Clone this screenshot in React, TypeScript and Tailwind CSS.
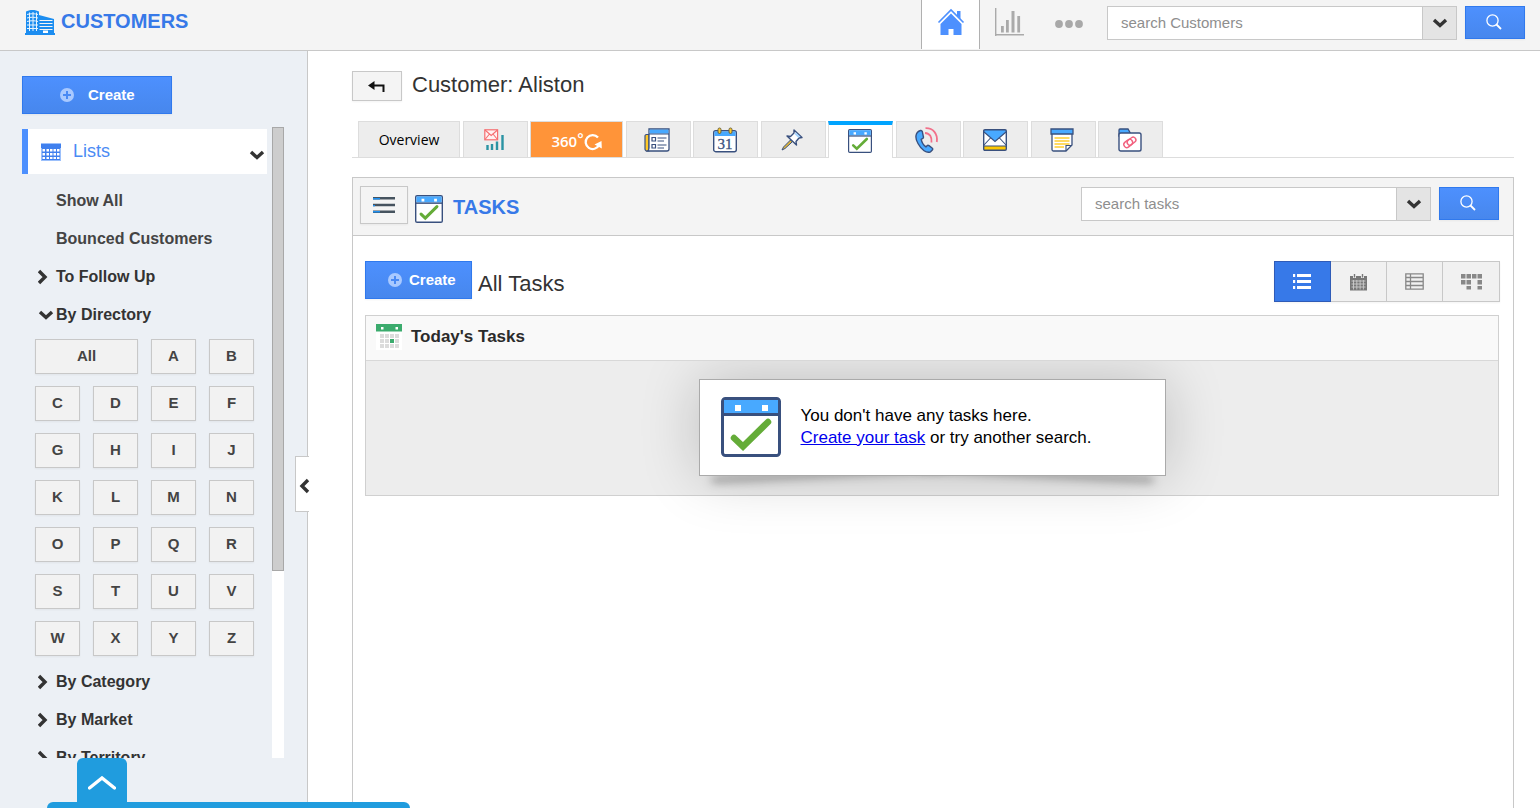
import { ReactNode, useState } from 'react';

const LETTERS = 'ABCDEFGHIJKLMNOPQRSTUVWXYZ'.split('');

function BuildingIcon() {
  return (
    <svg width="30" height="26" viewBox="0 0 30 26" fill="none" aria-hidden="true">
      <path d="M1 2.5C4 .4 11 .4 14 2.5V25H1z" fill="#1c8df0" />
      <path d="M2 5.5c3-1 8-1 11 0M2 9c3-1 8-1 11 0M2 12.5c3-1 8-1 11 0M2 16h11M2 19.5h11M4.5 3.5V22M8 3v19M11.5 3.5V22" stroke="#e9f4fe" strokeWidth="1" />
      <path d="M14 6l15 4v15H14z" fill="#1c8df0" />
      <path d="M14.5 11.5h13M14.5 14.5h13M14.5 17.5h13M14.5 20.5h13" stroke="#f4f4f4" strokeWidth="1.2" />
      <path d="M18 21.500h5V24h-5z" fill="#fff" />
      <path d="M0 24h30v2H0z" fill="#1c8df0" />
    </svg>
  );
}

function HomeIcon() {
  return (
    <svg width="28" height="28" viewBox="0 0 28 28" aria-hidden="true">
      <path d="M20 3h3.500v8L20 7.500z" fill="#4d90fe" />
      <path d="M1.500 14.500L14 2l12.500 12.500" fill="none" stroke="#4d90fe" strokeWidth="1.600" />
      <path d="M14 5.500L24.500 16v11h-8v-6h-5v6h-8V16z" fill="#4d90fe" />
    </svg>
  );
}

function StatsIcon() {
  return (
    <svg width="29" height="28" viewBox="0 0 29 28" fill="#aaa" aria-hidden="true">
      <path d="M0 0h1.400v28H0zM0 26h29v1.500H0zM6 18h2.800v6.500H6zM11 12h2.800v12.500H11zM16.500 3h3v21.500h-3zM22.300 8h2.800v16.500h-2.800z" />
    </svg>
  );
}

function DotsIcon() {
  return (
    <svg width="28" height="8" viewBox="0 0 28 8" fill="#a8a8a8" aria-hidden="true">
      <circle cx="4" cy="4" r="3.900" />
      <circle cx="14" cy="4" r="3.900" />
      <circle cx="24" cy="4" r="3.900" />
    </svg>
  );
}

function Chevron({ dir = 'down' }: { dir?: 'down' | 'right' | 'left' }) {
  const points = {
    down: '2,5 8,10.500 14,5',
    right: '1,2 7,8 1,14',
    left: '10,2 4,8 10,14',
  };
  return (
    <svg width="16" height="16" viewBox="0 0 16 16" className="shrink-0" aria-hidden="true">
      <polyline points={points[dir]} fill="none" stroke="#333" strokeWidth="3.400" />
    </svg>
  );
}

function PlusIcon() {
  return (
    <svg width="14" height="14" viewBox="0 0 14 14" className="shrink-0" aria-hidden="true">
      <circle cx="7" cy="7" r="7" fill="#a9c9ff" />
      <path d="M7 3v8M3 7h8" stroke="#4a8af4" strokeWidth="2" />
    </svg>
  );
}

function SearchIcon() {
  return (
    <svg width="16" height="16" viewBox="0 0 16 16" fill="none" stroke="#fff" aria-hidden="true">
      <circle cx="6.500" cy="6.500" r="5.600" strokeWidth="1.300" />
      <path d="M10.500 10.500l4.500 4.500" strokeWidth="1.800" />
    </svg>
  );
}

function ListsIcon() {
  return (
    <svg width="20" height="18" viewBox="0 0 20 18" aria-hidden="true">
      <path d="M0 0h20v18H0z" fill="#9cc0fb" />
      <path d="M0 1h20v4H0zM1 5h18v12H1z" fill="#4080ee" />
      <path d="M1.500 6H4v2.500H1.500zM5.500 6H8v2.500H5.500zM9 6h2.500v2.500H9zM12.500 6H15v2.500h-2.500zM16 6h2.500v2.500H16zM1.500 10H4v2.500H1.500zM5.500 10H8v2.500H5.500zM9 10h2.500v2.500H9zM12.500 10H15v2.500h-2.500zM16 10h2.500v2.500H16zM1.500 14H4v2H1.500zM5.500 14H8v2H5.500zM9 14h2.500v2H9zM12.500 14H15v2h-2.500zM16 14h2.500v2H16z" fill="#fff" />
    </svg>
  );
}

function TaskIcon({ className }: { className: string }) {
  return (
    <svg viewBox="0 0 60 60" className={className} aria-hidden="true">
      <rect x="1.500" y="1.500" width="57" height="57" rx="3" fill="#fff" stroke="#39507e" strokeWidth="3" />
      <path d="M3 3h54v13H3z" fill="#48a9ff" />
      <path d="M2 17.500h56" stroke="#39507e" strokeWidth="3" />
      <path d="M14 8h6v6h-6zM41 8h6v6h-6z" fill="#fff" />
      <path d="M13 41l9 8.500L47 25" fill="none" stroke="#64ac38" strokeWidth="6.500" strokeLinecap="round" />
    </svg>
  );
}

function BackIcon() {
  return (
    <svg width="18" height="12" viewBox="0 0 18 12" aria-hidden="true">
      <path d="M5 5.500h10.500V12" fill="none" stroke="#111" strokeWidth="2" />
      <path d="M0 5.500L6.500 1v9z" fill="#111" />
    </svg>
  );
}

function MailStatsIcon() {
  return (
    <svg width="20" height="22" viewBox="0 0 20 22" fill="none" aria-hidden="true">
      <rect x=".8" y=".8" width="12.800" height="10" fill="#fff1f1" stroke="#f66e70" strokeWidth="1.200" />
      <path d="M1 1l6.200 5.500L13.500 1M1 10.500L5.500 5M13.500 10.500L9 5" stroke="#f66e70" strokeWidth="1.100" />
      <path d="M3.500 21v-5M8 21v-6M13 21v-8.500M18.500 21V6" stroke="#2a93a3" strokeWidth="2.400" />
    </svg>
  );
}

function RotateIcon() {
  return (
    <svg width="18" height="18" viewBox="0 0 18 18" aria-hidden="true">
      <path d="M14 4.500A7 7 0 1 0 15 12" fill="none" stroke="#fff" strokeWidth="2.300" />
      <path d="M10.500 11.500L17.500 8l.3 7.500z" fill="#fff" />
    </svg>
  );
}

function NewsIcon() {
  return (
    <svg width="26" height="24" viewBox="0 0 26 24" fill="none" stroke="#39507e" aria-hidden="true">
      <path d="M1 8a1.500 1.500 0 0 1 1.500-1.500H5V23H3a2 2 0 0 1-2-2z" fill="#ffc928" strokeWidth="1.200" />
      <path d="M5 1h20v20a2 2 0 0 1-2 2H3.500C5 22 5 21 5 20z" fill="#fff" strokeWidth="1.300" />
      <path d="M5.600 1.600h18.800v4H5.600z" fill="#48a9ff" stroke="none" />
      <path d="M5 6h20M13.500 10h9M13.500 13H20M13.500 17h9M13.500 20H20" strokeWidth="1.200" />
      <path d="M8 9.500h3.500V13H8zM8 16.500h3.500V20H8z" strokeWidth="1.200" />
    </svg>
  );
}

function CalendarTabIcon() {
  return (
    <svg width="24" height="26" viewBox="0 0 24 26" aria-hidden="true">
      <rect x=".7" y="3.700" width="22.600" height="21" rx="2" fill="#fff" stroke="#39507e" strokeWidth="1.400" />
      <path d="M1.400 4.400h21.200V9H1.400z" fill="#48a9ff" />
      <rect x="5" y="1" width="3" height="5.500" rx="1.500" fill="#ffc928" stroke="#6b6340" />
      <rect x="16" y="1" width="3" height="5.500" rx="1.500" fill="#ffc928" stroke="#6b6340" />
      <text x="12" y="22" textAnchor="middle" fontSize="15" fill="#39507e" stroke="#39507e" strokeWidth=".3" fontFamily="Liberation Serif, serif">31</text>
    </svg>
  );
}

function PinIcon() {
  return (
    <svg width="22" height="22" viewBox="0 0 22 22" strokeLinejoin="round" aria-hidden="true">
      <path d="M1 21l1.500-3L9.500 11l1.800 1.800L4 19.500z" fill="#e0b63a" stroke="#39507e" strokeWidth="1" />
      <path d="M13 1l8 7.500-3 .5-3 3.500.5 3.500L6 7l3.500.5L13 4z" fill="#fff" stroke="#39507e" strokeWidth="1.400" />
      <path d="M15 3.500l4.500 4.200-2.500.8L13.500 5z" fill="#a8d5ff" />
    </svg>
  );
}

function PhoneIcon() {
  return (
    <svg width="24" height="26" viewBox="0 0 24 26" fill="none" aria-hidden="true">
      <path d="M5.500 3.500c-5 1.500-6 7-2.500 13 3.500 6.500 8.500 10 12.500 8.300l2-2c.4-.6.2-1.300-.4-1.800L14 18.600c-.7-.5-1.500-.4-2 .2l-1 1c-2-1.300-4.200-4.600-4.800-7.500l1.600-.8c.6-.4.8-1 .6-1.700L7.300 4.500c-.3-.8-1-1.200-1.800-1z" fill="#48a9ff" stroke="#39507e" strokeWidth="1.400" />
      <path d="M10 6c5 .3 7 4 6.500 9.500M10.500 1.200C18 1 23 6.500 21.800 15" stroke="#f2708a" strokeWidth="1.800" />
    </svg>
  );
}

function MailIcon() {
  return (
    <svg width="24" height="22" viewBox="0 0 24 22" aria-hidden="true">
      <rect x=".8" y=".8" width="22.400" height="20.400" rx="1.200" fill="#fff" />
      <path d="M1 17h22v4H1z" fill="#ffc800" />
      <path d="M1 1h22v2L12 12.500 1 3z" fill="#48a9ff" />
      <path d="M1 3l11 9.500L23 3M1 16l6.500-7M23 16l-6.500-7M1 17h22" fill="none" stroke="#39507e" strokeWidth="1.100" />
      <rect x=".7" y=".7" width="22.600" height="20.600" rx="1.200" fill="none" stroke="#39507e" strokeWidth="1.400" />
    </svg>
  );
}

function NoteIcon() {
  return (
    <svg width="24" height="24" viewBox="0 0 24 24" aria-hidden="true">
      <path d="M2 5h20v12l-6 6H3.500A1.500 1.500 0 0 1 2 21.500z" fill="#fff" stroke="#39507e" strokeWidth="1.300" />
      <path d="M1 1h22v5H1z" fill="#48a9ff" stroke="#39507e" strokeWidth="1.300" />
      <path d="M4.500 10h15M4.500 13h15M4.500 16h15M4.500 19H14" stroke="#ffce30" strokeWidth="1.400" />
      <path d="M16 23v-5.500h6" fill="none" stroke="#39507e" strokeWidth="1.100" />
    </svg>
  );
}

function AttachIcon() {
  return (
    <svg width="24" height="24" viewBox="0 0 24 24" aria-hidden="true">
      <path d="M1 6V2a1 1 0 0 1 1-1h8l2 3.500V8H1z" fill="#48a9ff" stroke="#39507e" strokeWidth="1.300" />
      <rect x="1" y="5" width="22" height="18" rx="1.800" fill="#fff" stroke="#39507e" strokeWidth="1.400" />
      <g fill="none" stroke="#f2607e" strokeWidth="1.400" transform="rotate(-38 12 14)">
        <rect x="5" y="11" width="9.500" height="6" rx="3" />
        <rect x="9" y="11.500" width="9.500" height="5.500" rx="2.700" />
      </g>
    </svg>
  );
}

function TodayIcon() {
  return (
    <svg width="26" height="26" viewBox="0 0 26 26" aria-hidden="true">
      <path d="M0 2h26v24H0z" fill="#fff" />
      <path d="M0 0h26v7.500H0z" fill="#3bab6d" />
      <path d="M5 3h2.500v2.500H5zM19.500 3H22v2.500h-2.500z" fill="#fff" />
      <path d="M4 10h4v4H4zM9 10h4v4H9zM14 10h4v4h-4zM19 10h4v4h-4zM4 15h4v4H4zM9 15h4v4H9zM19 15h4v4h-4zM4 20h4v4H4zM9 20h4v4H9zM14 20h4v4h-4zM19 20h4v4h-4z" fill="#dcdcdc" />
      <path d="M14 15h4v4h-4z" fill="#3bab6d" />
    </svg>
  );
}

function ListViewIcon() {
  return (
    <svg width="18" height="16" viewBox="0 0 18 16" fill="#fff" aria-hidden="true">
      <path d="M0 0h2.200v3H0zM4 0h14v3H4zM0 6h2.200v3H0zM4 6h14v3H4zM0 12h2.200v3H0zM4 12h14v3H4z" />
    </svg>
  );
}

function CalendarViewIcon() {
  return (
    <svg width="17" height="18" viewBox="0 0 17 18" aria-hidden="true">
      <path d="M0 3h17v14.500H0z" fill="#777" />
      <path d="M3 0h3v5H3zM11 0h3v5h-3z" fill="#f1f1f1" />
      <path d="M4.500 1v3.500M12.500 1v3.500" stroke="#777" strokeWidth="1.400" />
      <path d="M1.500 8h14M1.500 11h14M1.500 14h14M3.500 7v9.500M6.800 7v9.500M10.100 7v9.500M13.400 7v9.500" stroke="#ccc" strokeWidth=".9" />
    </svg>
  );
}

function TableViewIcon() {
  return (
    <svg width="19" height="17" viewBox="0 0 19 17" fill="none" stroke="#888" aria-hidden="true">
      <path d="M.8.800h17.400v15.400H.8zM.8 4.500h17.400M.8 8.500h17.400M.8 12.500h17.400M5.500.800v15.400" strokeWidth="1.300" />
    </svg>
  );
}

function KanbanIcon() {
  return (
    <svg width="21" height="16" viewBox="0 0 21 16" fill="#888" aria-hidden="true">
      <path d="M0 0h4.500v4.500H0zM5.500 0H10v4.500H5.500zM11 0h4.500v4.500H11zM16.500 0H21v4.500h-4.500zM0 6h4.500v4.500H0zM5.500 6H10v4.500H5.500zM16.500 6H21v4.500h-4.500zM5.500 12H10v3.500H5.500zM16.500 12H21v3.500h-4.500z" />
    </svg>
  );
}

function SearchBar({ label }: { label: string }) {
  return (
    <form className="flex items-start gap-2" onSubmit={(e) => e.preventDefault()}>
      <div className="flex h-[34px] border border-[#c8c8c8] bg-white">
        <input
          type="text"
          aria-label={label}
          placeholder={label}
          className="w-[314px] px-[13px] text-[15px] outline-none placeholder:text-[#8e8e8e]"
        />
        <button
          type="button"
          aria-label="Search options"
          className="flex w-[34px] items-center justify-center border-l border-[#c8c8c8] bg-[#e4e4e4]"
        >
          <Chevron />
        </button>
      </div>
      <button
        type="submit"
        aria-label="Search"
        className="flex h-[33px] w-[60px] items-center justify-center border border-[#3079ed] bg-linear-to-b from-[#4d90fe] to-[#4787ed] pr-0.5 pb-0.5 shadow-xs"
      >
        <SearchIcon />
      </button>
    </form>
  );
}

function Header() {
  return (
    <header className="flex h-[51px] shrink-0 justify-between border-b border-[#c8c8c8] bg-[#f4f4f4] pr-[15px]">
      <div className="flex items-start gap-1.5 pt-[9px] pl-[25px]">
        <BuildingIcon />
        <h1 className="text-xl leading-6 font-bold text-[#3779e8]">CUSTOMERS</h1>
      </div>
      <div className="flex">
        <a
          href="#home"
          aria-label="Home"
          className="flex h-[49px] w-[59px] items-center justify-center border-x border-[#b0b0b0] bg-white pb-1.5"
        >
          <HomeIcon />
        </a>
        <a href="#stats" aria-label="Statistics" className="flex h-11 items-center pr-4 pl-[15px]">
          <StatsIcon />
        </a>
        <button type="button" aria-label="More" className="flex h-[47px] items-center pr-6 pl-[15px]">
          <DotsIcon />
        </button>
        <div className="pt-1.5">
          <SearchBar label="search Customers" />
        </div>
      </div>
    </header>
  );
}

function TreeItem({ label, dir }: { label: string; dir?: 'down' | 'right' }) {
  return (
    <button
      type="button"
      className={`flex h-[38px] w-full items-center gap-0.5 pt-0.5 pl-4 text-left text-base font-bold ${dir ? 'text-[#333]' : 'text-[#444]'}`}
    >
      <span className="w-4">{dir && <Chevron dir={dir} />}</span>
      {label}
    </button>
  );
}

const letterClass =
  'h-[35px] border border-[#c8c8c8] bg-[#f2f2f2] text-[15px] font-bold text-[#444] shadow-xs';

function Sidebar() {
  return (
    <aside className="relative flex w-[308px] shrink-0 flex-col border-r border-[#c8c8c8] bg-[#ecf0f5] pt-[25px] pb-[50px] pl-[22px]">
      <button
        type="button"
        className="flex h-[38px] w-[150px] shrink-0 items-center gap-3.5 border border-[#3079ed] bg-linear-to-b from-[#4d90fe] to-[#4787ed] pl-[37px] text-[15px] font-bold text-white shadow-xs"
      >
        <PlusIcon />
        Create
      </button>
      <div className="mt-[13px] flex min-h-0 flex-1 gap-[5px]">
        <nav className="w-[245px] overflow-hidden pt-0.5">
          <button
            type="button"
            className="flex h-[45px] w-full items-center gap-3 border-l-6 border-[#4d90fe] bg-white pr-0.5 pl-[13px] text-left text-lg text-[#4b8bf4]"
          >
            <ListsIcon />
            <span className="flex-1 pb-0.5">Lists</span>
            <span className="pt-1.5">
              <Chevron />
            </span>
          </button>
          <div className="pt-[7px]">
            <TreeItem label="Show All" />
            <TreeItem label="Bounced Customers" />
            <TreeItem label="To Follow Up" dir="right" />
            <TreeItem label="By Directory" dir="down" />
            <div className="grid grid-cols-4 gap-x-[13px] gap-y-3 py-1.5 px-[13px]">
              <button type="button" className={`${letterClass} col-span-2`}>
                All
              </button>
              {LETTERS.map((letter) => (
                <button key={letter} type="button" className={letterClass}>
                  {letter}
                </button>
              ))}
            </div>
            <TreeItem label="By Category" dir="right" />
            <TreeItem label="By Market" dir="right" />
            <TreeItem label="By Territory" dir="right" />
          </div>
        </nav>
        {/* scroll track */}
        <div className="w-3 bg-white">
          <div className="h-[444px] border border-[#a8a8a8] bg-[#cdcdcd]" />
        </div>
      </div>
      <button
        type="button"
        aria-label="Collapse sidebar"
        className="absolute top-[405px] -right-0.5 flex h-14 w-3.5 items-center justify-center border-y border-l border-[#c8c8c8] bg-white pt-1 pl-1.5"
      >
        <Chevron dir="left" />
      </button>
    </aside>
  );
}

const tabs: { id: string; icon: ReactNode }[] = [
  { id: 'Overview', icon: <span className="font-['Open_Sans',sans-serif] text-[14px] text-black">Overview</span> },
  { id: 'Campaigns', icon: <MailStatsIcon /> },
  {
    id: '360',
    icon: (
      <span className="flex items-center pt-1 font-['Open_Sans',sans-serif] text-[15px] font-semibold text-white">
        360
        <span className="pb-1.5">°</span>
        <RotateIcon />
      </span>
    ),
  },
  { id: 'News', icon: <NewsIcon /> },
  { id: 'Calendar', icon: <CalendarTabIcon /> },
  { id: 'Pins', icon: <PinIcon /> },
  { id: 'Tasks', icon: <TaskIcon className="size-6" /> },
  { id: 'Calls', icon: <PhoneIcon /> },
  { id: 'Emails', icon: <MailIcon /> },
  { id: 'Notes', icon: <NoteIcon /> },
  { id: 'Documents', icon: <AttachIcon /> },
];

function Tabs() {
  const [active, setActive] = useState('Tasks');

  const tabClass = (id: string) => {
    if (id === active) return 'w-[65px] border-x border-t-4 border-x-[#ddd] border-t-[#00a4ff] bg-white pr-0.5 pb-0.5';
    if (id === '360') return 'w-[93px] border border-[#ddd] bg-[#ff9439]';
    if (id === 'Overview') return 'w-[102px] border border-[#ddd] bg-[#ededed]';
    return 'w-[65px] border border-[#ddd] bg-[#ededed] pr-0.5';
  };

  return (
    <div className="mt-5 border-b border-[#ddd] pl-1.5">
      <div role="tablist" className="-mb-px flex w-[805px] justify-between">
        {tabs.map((tab) => (
          <button
            key={tab.id}
            type="button"
            role="tab"
            aria-label={tab.id}
            aria-selected={tab.id === active}
            onClick={() => setActive(tab.id)}
            className={`flex h-[37px] items-center justify-center ${tabClass(tab.id)}`}
          >
            {tab.icon}
          </button>
        ))}
      </div>
    </div>
  );
}

const views = [
  { name: 'List view', icon: <ListViewIcon /> },
  { name: 'Calendar view', icon: <CalendarViewIcon /> },
  { name: 'Table view', icon: <TableViewIcon /> },
  { name: 'Board view', icon: <KanbanIcon /> },
];

function ViewSwitch() {
  return (
    <div className="flex h-[41px] shadow-xs">
      {views.map((view, i) => (
        <button
          key={view.name}
          type="button"
          aria-label={view.name}
          className={`flex items-center justify-center ${
            i === 0
              ? 'w-[57px] border border-[#2f5bb7] bg-[#3779e8] pr-0.5'
              : 'w-14 border-y border-r border-[#c8c8c8] bg-[#f1f1f1] last:w-[57px]'
          }`}
        >
          {view.icon}
        </button>
      ))}
    </div>
  );
}

function EmptyCard() {
  return (
    <div className="relative isolate w-[467px] before:absolute before:top-[80%] before:bottom-[15px] before:left-3 before:-z-10 before:w-1/2 before:-rotate-3 before:shadow-[0_15px_10px_#777] after:absolute after:top-[80%] after:right-3 after:bottom-[15px] after:-z-10 after:w-1/2 after:rotate-3 after:shadow-[0_15px_10px_#777]">
      <div className="flex h-[97px] items-center gap-5 border border-[#aaa] bg-white pb-0.5 pl-[21px] shadow-[0_0_60px_rgba(0,0,0,0.2)]">
        <TaskIcon className="size-[60px]" />
        <p className="text-[17px] leading-[22px] text-black">
          You don't have any tasks here.
          <br />
          <a href="#create" className="text-[#0000ee] underline">
            Create your task
          </a>{' '}
          or try another search.
        </p>
      </div>
    </div>
  );
}

function TasksPanel() {
  return (
    <section className="mt-[19px] flex flex-1 flex-col border border-b-0 border-[#c8c8c8]">
      <div className="flex h-[58px] items-start justify-between border-b border-[#c8c8c8] bg-[#f4f4f4] pr-3.5 pl-[7px]">
        <div className="flex items-center pt-2">
          <button
            type="button"
            aria-label="Menu"
            className="flex h-[38px] w-12 items-center justify-center border border-[#c8c8c8] bg-[#f4f4f4] shadow-xs"
          >
            <svg width="22" height="16" viewBox="0 0 22 16" aria-hidden="true">
              <path d="M0 0h22v2.500H0zM0 6.800h22v2.500H0zM0 13.500h22V16H0z" fill="#46535f" />
              <path d="M0 1h7v1.500H0zM0 8h2v1.300H0zM0 14h7v1.500H0z" fill="#1e8ff0" />
            </svg>
          </button>
          <span className="pt-2 pl-[7px]">
            <TaskIcon className="size-7" />
          </span>
          <h2 className="pt-1 pl-2.5 text-xl font-bold text-[#3779e8]">TASKS</h2>
        </div>
        <div className="pt-[9px]">
          <SearchBar label="search tasks" />
        </div>
      </div>
      <div className="pt-[25px] pr-[13px] pl-3">
        <div className="flex h-[54px] items-start justify-between">
          <div className="flex items-start gap-1.5">
            <button
              type="button"
              className="flex h-[38px] w-[107px] items-center gap-[7px] border border-[#3079ed] bg-linear-to-b from-[#4d90fe] to-[#4787ed] pl-[22px] text-[15px] font-bold text-white shadow-xs"
            >
              <PlusIcon />
              Create
            </button>
            <h3 className="pt-2 text-[22px] leading-[30px] text-[#333]">All Tasks</h3>
          </div>
          <ViewSwitch />
        </div>
        <div className="mr-px border border-[#d0d0d0] bg-[#ededed]">
          <div className="relative z-10 flex h-[45px] items-center gap-[9px] border-b border-[#d8d8d8] bg-[#f9f9f9] pb-0.5 pl-2.5">
            <TodayIcon />
            <h4 className="text-[17px] font-bold text-[#2b2b2b]">Today's Tasks</h4>
          </div>
          <div className="flex h-[134px] items-start justify-center pt-[18px]">
            <EmptyCard />
          </div>
        </div>
      </div>
    </section>
  );
}

export default function App() {
  return (
    <div className="relative flex h-screen flex-col overflow-hidden bg-white font-['Liberation_Sans',Arial,sans-serif]">
      <Header />
      <div className="flex min-h-0 flex-1">
        <Sidebar />
        <main className="flex min-w-0 flex-1 flex-col pt-5 pr-[26px] pl-11">
          <div className="flex items-center gap-2.5">
            <button
              type="button"
              aria-label="Back"
              className="flex h-[30px] w-[50px] items-center justify-center border border-[#c8c8c8] bg-[#f4f4f4] shadow-xs"
            >
              <BackIcon />
            </button>
            <h2 className="pb-0.5 text-[22px] leading-7 text-[#333]">Customer: Aliston</h2>
          </div>
          <Tabs />
          <TasksPanel />
        </main>
      </div>
      {/* bottom drawer handle */}
      <div className="absolute bottom-0 left-[47px] w-[363px]">
        <button
          type="button"
          aria-label="Open drawer"
          className="ml-[30px] flex h-11 w-[50px] items-center justify-center rounded-t-md bg-[#209cde] pt-1.5"
        >
          <svg width="28" height="14" viewBox="0 0 28 14" fill="none" aria-hidden="true">
            <path d="M1.500 12L14 2l12.500 10" stroke="#fff" strokeWidth="3.400" strokeLinecap="round" />
          </svg>
        </button>
        <div className="h-1.5 rounded-t-md bg-[#209cde]" />
      </div>
    </div>
  );
}
